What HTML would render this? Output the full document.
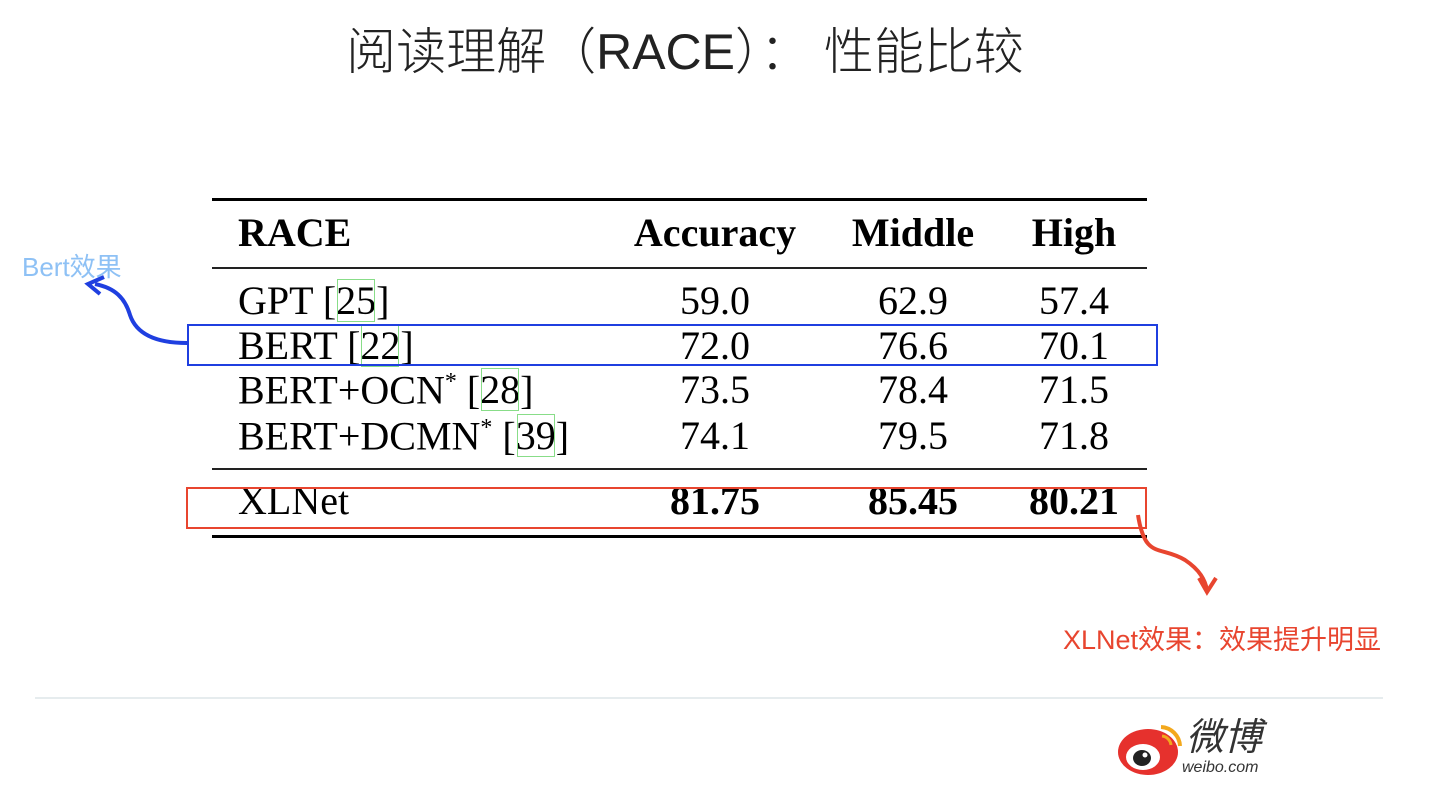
<!DOCTYPE html>
<html><head><meta charset="utf-8"><style>
body{margin:0;width:1440px;height:791px;background:#fff;position:relative;overflow:hidden;font-family:"Liberation Sans","Noto Sans CJK SC",sans-serif}
.a{position:absolute;white-space:nowrap}
.s{font-family:"Liberation Serif","Noto Serif CJK SC",serif;font-size:40px;color:#000;line-height:1}
.c{transform:translateX(-50%)}
.hl{position:absolute;left:212px;width:935px;background:#000}
.ref{outline:1px solid #8d8;outline-offset:-2px}
</style></head><body>
<div class="a" style="left:0;width:1370px;text-align:center;top:12px;font-size:50px;color:#222;font-weight:300">阅读理解（RACE）： 性能比较</div>

<div class="hl" style="top:198px;height:3px"></div>
<div class="hl" style="top:267px;height:2px;background:#222"></div>
<div class="hl" style="top:468px;height:2px;background:#222"></div>
<div class="hl" style="top:535px;height:3px"></div>

<div class="a s" style="left:238px;top:213px;font-weight:bold">RACE</div>
<div class="a s c" style="left:715px;top:213px;font-weight:bold">Accuracy</div>
<div class="a s c" style="left:913px;top:213px;font-weight:bold">Middle</div>
<div class="a s c" style="left:1074px;top:213px;font-weight:bold">High</div>

<div class="a s" style="left:238px;top:281px">GPT [<span class="ref">25</span>]</div>
<div class="a s" style="left:238px;top:326px">BERT [<span class="ref">22</span>]</div>
<div class="a s" style="left:238px;top:370px">BERT+OCN<sup style="font-size:24px">*</sup> [<span class="ref">28</span>]</div>
<div class="a s" style="left:238px;top:416px">BERT+DCMN<sup style="font-size:24px">*</sup> [<span class="ref">39</span>]</div>
<div class="a s" style="left:238px;top:481px">XLNet</div>

<div class="a s c" style="left:715px;top:281px">59.0</div><div class="a s c" style="left:913px;top:281px">62.9</div><div class="a s c" style="left:1074px;top:281px">57.4</div>
<div class="a s c" style="left:715px;top:326px">72.0</div><div class="a s c" style="left:913px;top:326px">76.6</div><div class="a s c" style="left:1074px;top:326px">70.1</div>
<div class="a s c" style="left:715px;top:370px">73.5</div><div class="a s c" style="left:913px;top:370px">78.4</div><div class="a s c" style="left:1074px;top:370px">71.5</div>
<div class="a s c" style="left:715px;top:416px">74.1</div><div class="a s c" style="left:913px;top:416px">79.5</div><div class="a s c" style="left:1074px;top:416px">71.8</div>
<div class="a s c" style="left:715px;top:481px;font-weight:bold">81.75</div><div class="a s c" style="left:913px;top:481px;font-weight:bold">85.45</div><div class="a s c" style="left:1074px;top:481px;font-weight:bold">80.21</div>

<div class="a" style="left:187px;top:324px;width:967px;height:38px;border:2px solid #1f3fe0"></div>
<div class="a" style="left:186px;top:487px;width:957px;height:38px;border:2px solid #e8452f"></div>

<svg class="a" style="left:0;top:0" width="1440" height="791">
<path d="M187 343 C150 343 135 330 130 315 C125 298 115 288 95 284" fill="none" stroke="#1f3fe0" stroke-width="4"/>
<path d="M104 277 L88 284 L100 294" fill="none" stroke="#1f3fe0" stroke-width="4"/>
<path d="M1138 515 C1145 560 1160 545 1185 560 C1200 570 1205 580 1207 590" fill="none" stroke="#e8452f" stroke-width="4"/>
<path d="M1199 578 L1207 592 L1216 578" fill="none" stroke="#e8452f" stroke-width="4"/>
<line x1="35" y1="698" x2="1383" y2="698" stroke="#e6ecee" stroke-width="2"/>
<ellipse cx="1148" cy="752" rx="30" ry="23" fill="#e6312d"/>
<ellipse cx="1143" cy="757" rx="17" ry="13" fill="#fff"/>
<ellipse cx="1142" cy="758" rx="9" ry="8" fill="#222"/>
<circle cx="1145" cy="755" r="2.5" fill="#fff"/>
<path d="M1161 727 A20 20 0 0 1 1180 746" fill="none" stroke="#f3a81c" stroke-width="4"/>
<path d="M1162 736 A10 10 0 0 1 1171 745" fill="none" stroke="#f3a81c" stroke-width="3"/>
</svg>
<div class="a" style="left:22px;top:247px;font-size:26px;color:#8ec1f5">Bert效果</div>
<div class="a" style="left:1063px;top:618px;font-size:27px;color:#e8452f">XLNet效果：效果提升明显</div>
<div class="a" style="left:1186px;top:718px;font-size:38px;font-style:italic;color:#333;line-height:1.1">微博</div>
<div class="a" style="left:1182px;top:759px;font-size:16px;font-style:italic;color:#333">weibo.com</div>
</body></html>
